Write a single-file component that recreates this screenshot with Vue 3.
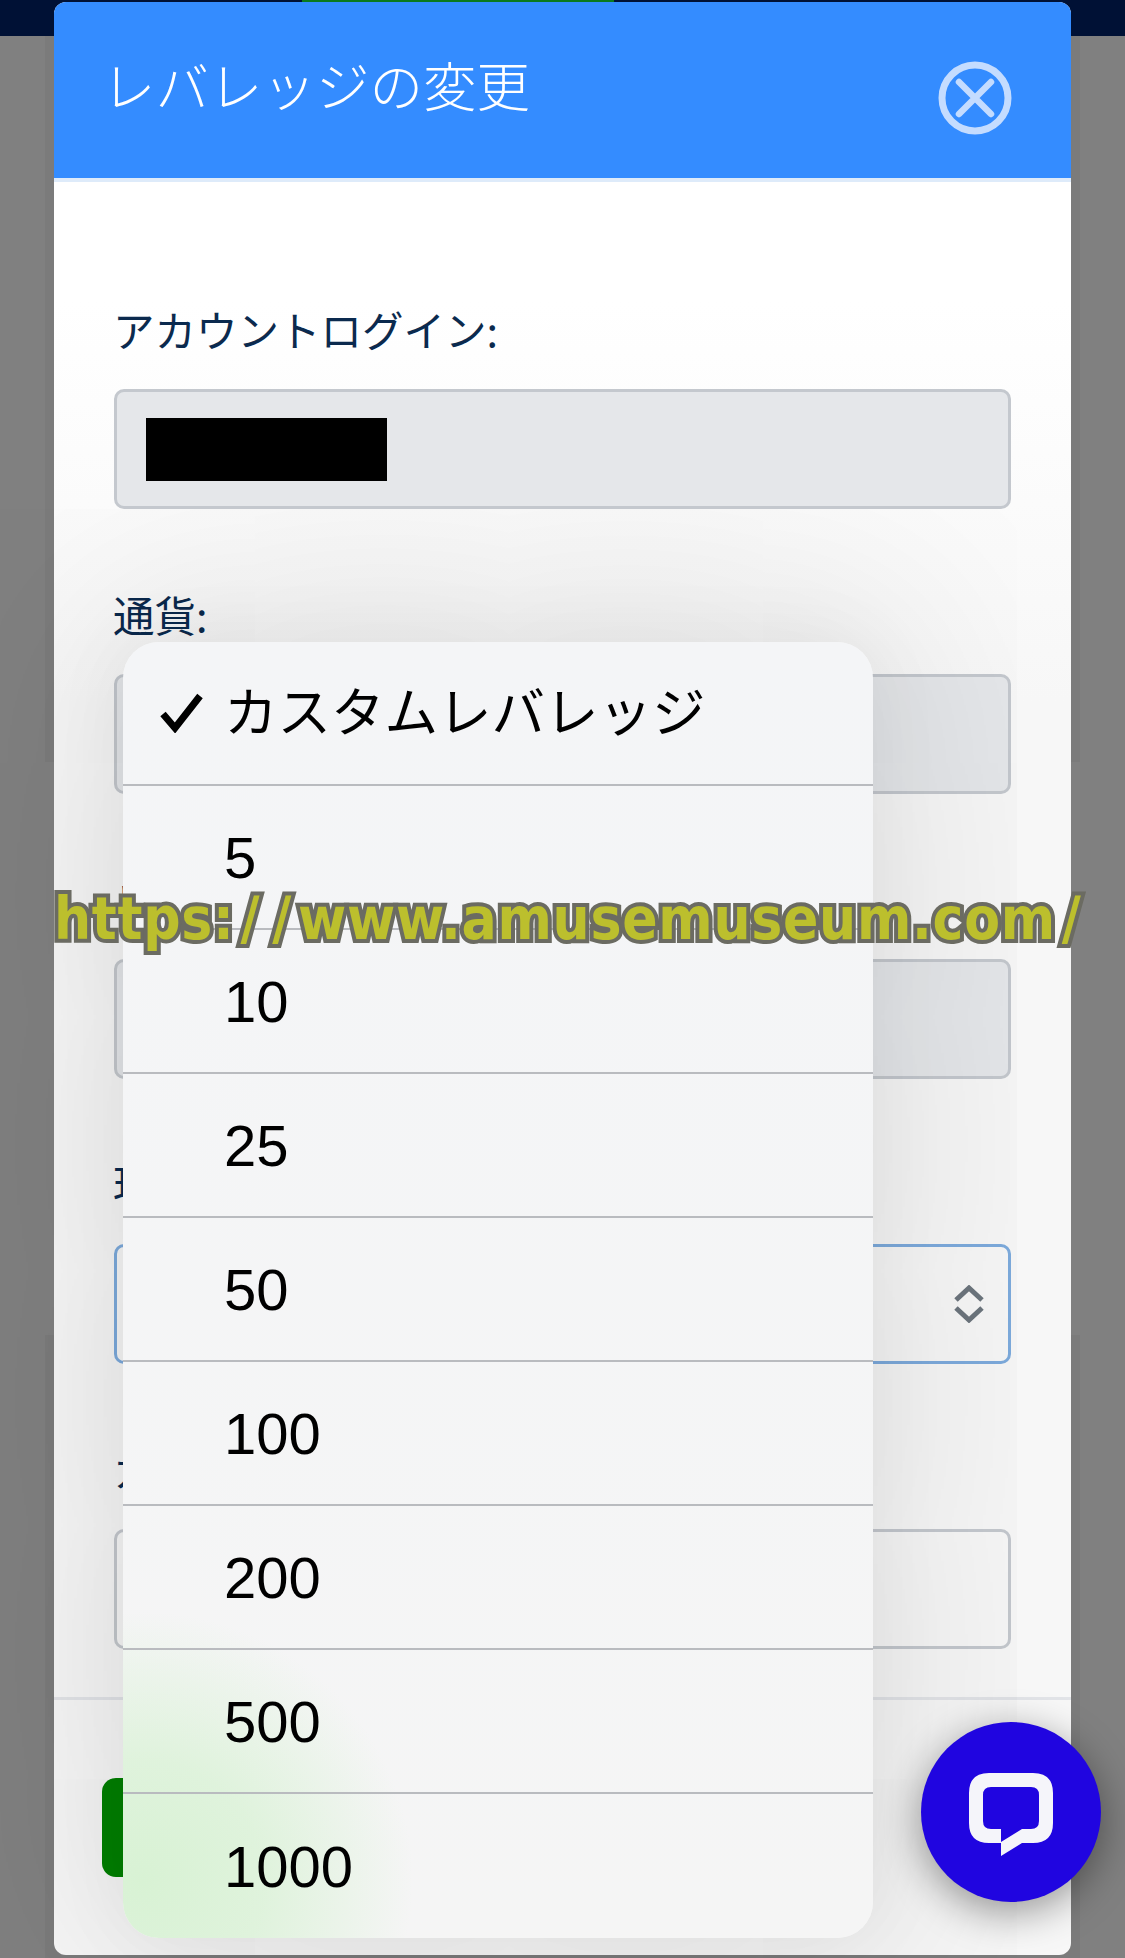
<template>
  <div class="screen">
    <div class="topbar"><span class="topbar-tab"></span></div>
    <div class="page-card page-card--upper"></div>
    <div class="page-card page-card--lower"></div>

    <section class="modal">
      <header class="modal-header">
        <h2>レバレッジの変更</h2>
        <button class="close" type="button" aria-label="close">
          <svg width="76" height="76" viewBox="0 0 76 76" fill="none" stroke="#c4dcff">
            <circle cx="38" cy="38" r="33" stroke-width="7" />
            <path d="M22 22 L54 54 M54 22 L22 54" stroke-width="6.5" stroke-linecap="round" />
          </svg>
        </button>
      </header>

      <form class="modal-form" @submit.prevent>
        <div v-for="field in fields" :key="field.label" class="field">
          <label>{{ field.label }}</label>
          <div class="input" :class="'input--' + field.kind">
            <span v-if="field.masked" class="mask"></span>
            <svg v-if="field.kind === 'focus'" class="chevrons" width="32" height="38" viewBox="0 0 32 38" fill="none" stroke="#6c757d" stroke-width="5">
              <path d="M3 15 L16 3 L29 15 M3 23 L16 35 L29 23" />
            </svg>
          </div>
        </div>
      </form>

      <footer class="modal-footer">
        <button class="btn-save" type="button"></button>
      </footer>
    </section>

    <ul class="picker">
      <li v-for="option in options" :key="option" class="picker-row">
        <span class="picker-check">
          <svg v-if="option === selected" width="44" height="40" viewBox="0 0 44 40" fill="none" stroke="#000" stroke-width="7">
            <path d="M3 21 L15 35 L40 3" />
          </svg>
        </span>
        <span class="picker-text">{{ option }}</span>
      </li>
    </ul>

    <div class="watermark">https:<span class="slash">/</span><span class="slash">/</span>www.amusemuseum.com<span class="slash">/</span></div>

    <button class="chat" type="button" aria-label="chat">
      <svg width="180" height="180" viewBox="0 0 180 180">
        <path
          fill="#f5f5fa"
          fill-rule="evenodd"
          d="M68 51 H112 Q132 51 132 71 V101 Q132 121 112 121 H101 L80 134 V121 H68 Q48 121 48 101 V71 Q48 51 68 51 Z M70 65 Q62 65 62 73 V99 Q62 107 70 107 H80 V120 L101 107 H110 Q118 107 118 99 V73 Q118 65 110 65 Z"
        />
      </svg>
    </button>
  </div>
</template>

<script setup>
const fields = [
  { label: 'アカウントログイン:', kind: 'disabled', masked: true },
  { label: '通貨:', kind: 'disabled' },
  { label: 'レバレッジ:', kind: 'disabled' },
  { label: '現在のレバレッジ:', kind: 'focus' },
  { label: 'カスタムレバレッジ:', kind: 'plain' }
]

const selected = 'カスタムレバレッジ'
const options = [selected, '5', '10', '25', '50', '100', '200', '500', '1000']
</script>

<style>
html,
body {
  margin: 0;
  background: #808080;
}
</style>

<style scoped>
.screen {
  position: relative;
  width: 1125px;
  height: 1958px;
  overflow: hidden;
  background: #808080;
  font-family: "Noto Sans CJK JP", "Liberation Sans", sans-serif;
}

.topbar {
  height: 36px;
  background: #001135;
}

.topbar-tab {
  display: block;
  width: 312px;
  height: 3px;
  margin-left: 302px;
  background: #0a7a1e;
}

.page-card {
  position: absolute;
  left: 45px;
  width: 1035px;
  background: rgba(0, 0, 0, 0.04);
}

.page-card--upper {
  top: 36px;
  height: 726px;
}

.page-card--lower {
  top: 1335px;
  height: 623px;
}

.modal {
  position: absolute;
  left: 54px;
  top: 2px;
  width: 1017px;
  height: 1953px;
  display: flex;
  flex-direction: column;
  background: linear-gradient(#fff 300px, #f7f7f7 700px);
  border-radius: 12px;
  overflow: hidden;
}

.modal-header {
  flex: none;
  box-sizing: border-box;
  height: 180px;
  display: flex;
  justify-content: space-between;
  padding: 47px 58px 0 48px;
  background: #348cff;
  border-bottom: 4px solid #deebfa;
}

.modal-header h2 {
  margin: 0;
  height: 70px;
  font-size: 53.5px;
  font-weight: 300;
  line-height: 70px;
  color: #fff;
}

.close {
  width: 76px;
  height: 76px;
  margin-top: 11px;
  padding: 0;
  border: 0;
  background: none;
}

.modal-form {
  flex: none;
  display: flex;
  flex-direction: column;
  gap: 77px;
  padding: 119px 60px 48px;
}

.field label {
  display: block;
  height: 60px;
  margin: -2px 0 30px -1px;
  font-size: 41.5px;
  font-weight: 400;
  line-height: 60px;
  color: #0b2a4e;
}

.input {
  box-sizing: border-box;
  position: relative;
  display: flex;
  align-items: center;
  height: 120px;
  padding-left: 29px;
  border: 3px solid #c4c8ce;
  border-radius: 10px;
}

.input--disabled {
  background: #e5e7ea;
}

.input--focus {
  border-color: #7dabdd;
}

.mask {
  width: 241px;
  height: 63px;
  background: #000;
}

.chevrons {
  position: absolute;
  right: 23px;
  top: 38px;
}

.modal-footer {
  flex: 1;
  padding: 78px 48px 0;
  border-top: 3px solid #e2e4e8;
}

.btn-save {
  display: block;
  width: 500px;
  height: 99px;
  border: 0;
  border-radius: 14px;
  background: #008000;
}

.picker {
  position: absolute;
  left: 123px;
  top: 642px;
  width: 750px;
  margin: 0;
  padding: 0;
  list-style: none;
  overflow: hidden;
  border-radius: 36px;
  background:
    radial-gradient(ellipse 270px 270px at 20px 1240px, #d8f2d4 0%, rgba(216, 242, 212, 0.75) 45%, rgba(216, 242, 212, 0) 100%),
    linear-gradient(#f4f5f7, #f5f5f5);
  box-shadow: 0 0 300px rgba(0, 0, 0, 0.16), 0 0 80px rgba(0, 0, 0, 0.05);
}

.picker-row {
  box-sizing: border-box;
  height: 144px;
  display: flex;
  align-items: center;
  border-bottom: 2px solid #b9bbbf;
  color: #000;
}

.picker-row:last-child {
  border-bottom: 0;
}

.picker-check {
  flex: none;
  width: 101px;
  padding-left: 37px;
  box-sizing: border-box;
  display: flex;
}

.picker-text {
  font-family: "Liberation Sans", "Noto Sans CJK JP", sans-serif;
  font-size: 58px;
  line-height: 70px;
  margin-top: 2px;
}

.picker-row:first-child .picker-text {
  font-size: 53.5px;
}

.watermark {
  position: absolute;
  left: 54px;
  top: 883px;
  font-family: "DejaVu Sans Condensed", "DejaVu Sans", sans-serif;
  font-size: 58px;
  font-weight: 700;
  line-height: 72px;
  letter-spacing: 0.7px;
  white-space: nowrap;
  color: #bcbf2d;
  -webkit-text-stroke: 8px #6b6b62;
  paint-order: stroke fill;
}

.slash {
  margin: 0 6px;
}

.chat {
  position: absolute;
  left: 921px;
  top: 1722px;
  width: 180px;
  height: 180px;
  padding: 0;
  border: 0;
  border-radius: 50%;
  background: #2005e0;
  box-shadow: 0 10px 40px rgba(0, 0, 0, 0.4);
}

.chat svg {
  display: block;
}
</style>
